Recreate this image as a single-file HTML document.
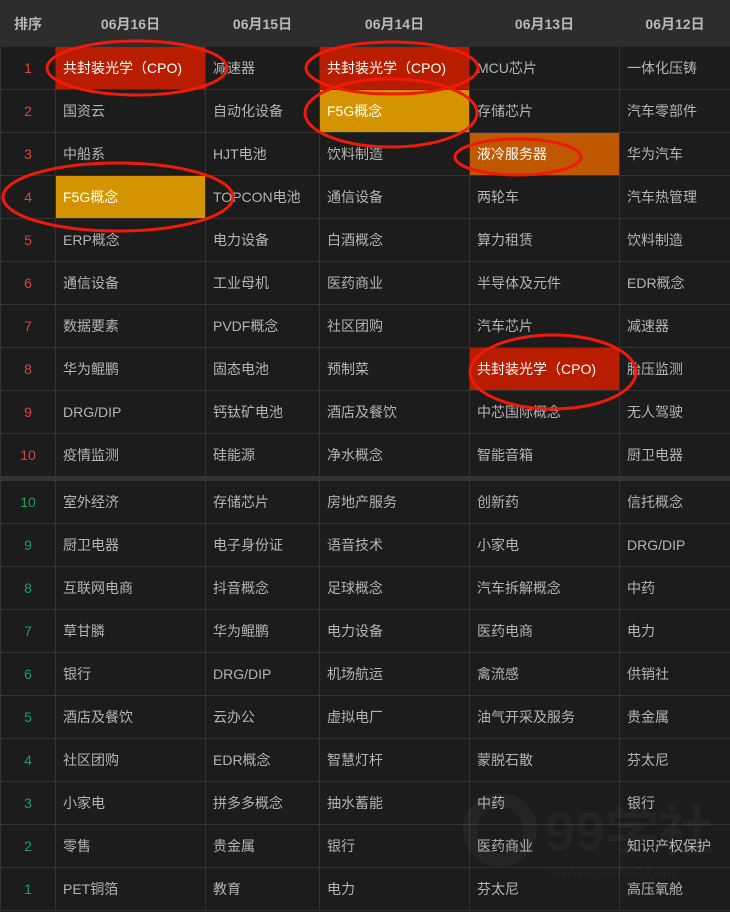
<!DOCTYPE html><html><head><meta charset="utf-8"><style>
body{margin:0;background:#1c1c1c;width:730px;height:912px;overflow:hidden;position:relative;font-family:"Liberation Sans","Noto Sans CJK SC",sans-serif}
table{border-collapse:collapse;table-layout:fixed;width:730px;position:absolute;left:0;top:0}
td,th{border:1px solid #333;padding:0 0 0 7px;font-size:14px;color:#b4b4b4;height:42px;white-space:nowrap;overflow:hidden;text-align:left}
th{background:#2d2d2d;height:45px;color:#b8b8b8;font-weight:bold;text-align:center;padding:0;border-color:#2d2d2d;font-size:14px}
td.n{text-align:center;padding:0;color:#d8453a}
td.g{text-align:center;padding:0;color:#1f9c5c}
.r{background:#b81d00;color:#fff}.o{background:#d49400;color:#fff}.d{background:#bf5800;color:#fff}
tr.sep td{height:3px;background:#333;padding:0}
svg{position:absolute;left:0;top:0}
</style></head><body>
<table>
<colgroup><col style="width:55px"><col style="width:150px"><col style="width:114px"><col style="width:150px"><col style="width:150px"><col style="width:111px"></colgroup>
<tr><th>排序</th><th>06月16日</th><th>06月15日</th><th>06月14日</th><th>06月13日</th><th>06月12日</th></tr>
<tr><td class="n">1</td><td class="r">共封装光学（CPO)</td><td>减速器</td><td class="r">共封装光学（CPO)</td><td>MCU芯片</td><td>一体化压铸</td></tr>
<tr><td class="n">2</td><td>国资云</td><td>自动化设备</td><td class="o">F5G概念</td><td>存储芯片</td><td>汽车零部件</td></tr>
<tr><td class="n">3</td><td>中船系</td><td>HJT电池</td><td>饮料制造</td><td class="d">液冷服务器</td><td>华为汽车</td></tr>
<tr><td class="n">4</td><td class="o">F5G概念</td><td>TOPCON电池</td><td>通信设备</td><td>两轮车</td><td>汽车热管理</td></tr>
<tr><td class="n">5</td><td>ERP概念</td><td>电力设备</td><td>白酒概念</td><td>算力租赁</td><td>饮料制造</td></tr>
<tr><td class="n">6</td><td>通信设备</td><td>工业母机</td><td>医药商业</td><td>半导体及元件</td><td>EDR概念</td></tr>
<tr><td class="n">7</td><td>数据要素</td><td>PVDF概念</td><td>社区团购</td><td>汽车芯片</td><td>减速器</td></tr>
<tr><td class="n">8</td><td>华为鲲鹏</td><td>固态电池</td><td>预制菜</td><td class="r">共封装光学（CPO)</td><td>胎压监测</td></tr>
<tr><td class="n">9</td><td>DRG/DIP</td><td>钙钛矿电池</td><td>酒店及餐饮</td><td>中芯国际概念</td><td>无人驾驶</td></tr>
<tr><td class="n">10</td><td>疫情监测</td><td>硅能源</td><td>净水概念</td><td>智能音箱</td><td>厨卫电器</td></tr>
<tr class="sep"><td></td><td></td><td></td><td></td><td></td><td></td></tr>
<tr><td class="g">10</td><td>室外经济</td><td>存储芯片</td><td>房地产服务</td><td>创新药</td><td>信托概念</td></tr>
<tr><td class="g">9</td><td>厨卫电器</td><td>电子身份证</td><td>语音技术</td><td>小家电</td><td>DRG/DIP</td></tr>
<tr><td class="g">8</td><td>互联网电商</td><td>抖音概念</td><td>足球概念</td><td>汽车拆解概念</td><td>中药</td></tr>
<tr><td class="g">7</td><td>草甘膦</td><td>华为鲲鹏</td><td>电力设备</td><td>医药电商</td><td>电力</td></tr>
<tr><td class="g">6</td><td>银行</td><td>DRG/DIP</td><td>机场航运</td><td>禽流感</td><td>供销社</td></tr>
<tr><td class="g">5</td><td>酒店及餐饮</td><td>云办公</td><td>虚拟电厂</td><td>油气开采及服务</td><td>贵金属</td></tr>
<tr><td class="g">4</td><td>社区团购</td><td>EDR概念</td><td>智慧灯杆</td><td>蒙脱石散</td><td>芬太尼</td></tr>
<tr><td class="g">3</td><td>小家电</td><td>拼多多概念</td><td>抽水蓄能</td><td>中药</td><td>银行</td></tr>
<tr><td class="g">2</td><td>零售</td><td>贵金属</td><td>银行</td><td>医药商业</td><td>知识产权保护</td></tr>
<tr><td class="g">1</td><td>PET铜箔</td><td>教育</td><td>电力</td><td>芬太尼</td><td>高压氧舱</td></tr>
</table>
<svg width="730" height="912">
<g fill="none" stroke="#fff" stroke-opacity="0.035" stroke-width="14"><circle cx="500" cy="830" r="30"/></g>
<text x="545" y="850" font-size="54" font-weight="bold" fill="#fff" fill-opacity="0.035" font-family="Liberation Sans,Noto Sans CJK SC,sans-serif">99学社</text>
<text x="550" y="877" font-size="15" fill="#fff" fill-opacity="0.045" font-family="Liberation Sans,sans-serif">www.xueshe9.com</text>
<g fill="none" stroke="#f01a0a" stroke-width="3">
<ellipse cx="137" cy="68" rx="90" ry="27"/>
<ellipse cx="392" cy="68" rx="86" ry="26"/>
<ellipse cx="391" cy="113" rx="86" ry="34"/>
<ellipse cx="518" cy="157" rx="63" ry="18"/>
<ellipse cx="118" cy="197" rx="115" ry="34"/>
<ellipse cx="553" cy="372" rx="83" ry="37"/>
</g>
</svg>
</body></html>
